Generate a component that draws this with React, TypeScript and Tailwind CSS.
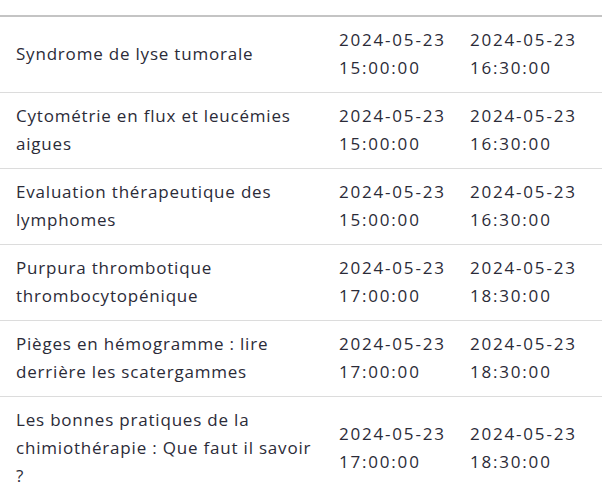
import React from "react";

const rows: { title: string[]; start: string; end: string; d: string }[] = [
  { title: ["Syndrome de lyse tumorale"], d: "2024-05-23", start: "15:00:00", end: "16:30:00" },
  { title: ["Cytométrie en flux et leucémies", "aigues"], d: "2024-05-23", start: "15:00:00", end: "16:30:00" },
  { title: ["Evaluation thérapeutique des", "lymphomes"], d: "2024-05-23", start: "15:00:00", end: "16:30:00" },
  { title: ["Purpura thrombotique", "thrombocytopénique"], d: "2024-05-23", start: "17:00:00", end: "18:30:00" },
  { title: ["Pièges en hémogramme : lire", "derrière les scatergammes"], d: "2024-05-23", start: "17:00:00", end: "18:30:00" },
  { title: ["Les bonnes pratiques de la", "chimiothérapie : Que faut il savoir", "?"], d: "2024-05-23", start: "17:00:00", end: "18:30:00" },
];

function Lines({ lines }: { lines: string[] }) {
  return (
    <>
      {lines.map((l, i) => (
        <React.Fragment key={i}>
          {i > 0 && <br />}
          {l}
        </React.Fragment>
      ))}
    </>
  );
}

export default function App() {
  return (
    <div
      className="w-[602px] h-[492px] overflow-hidden bg-white text-[#2b2b38] text-[17px] leading-[28px]"
      style={{ fontFamily: '"Open Sans", "Noto Sans", sans-serif' }}
    >
      <div className="h-[15px]" />
      <div className="border-t-2 border-[#c4c4c4]">
        {rows.map((r, i) => (
          <div
            key={i}
            className="grid grid-cols-[323px_131px_148px] items-center border-b border-[#dcdcdc] pt-[9px] pb-[10px] whitespace-nowrap"
          >
            <div className="pl-[16px] tracking-[0.8px]">
              <Lines lines={r.title} />
            </div>
            <div className="pl-[16px] tracking-[1.8px]">
              <Lines lines={[r.d, r.start]} />
            </div>
            <div className="pl-[16px] tracking-[1.8px]">
              <Lines lines={[r.d, r.end]} />
            </div>
          </div>
        ))}
      </div>
    </div>
  );
}
